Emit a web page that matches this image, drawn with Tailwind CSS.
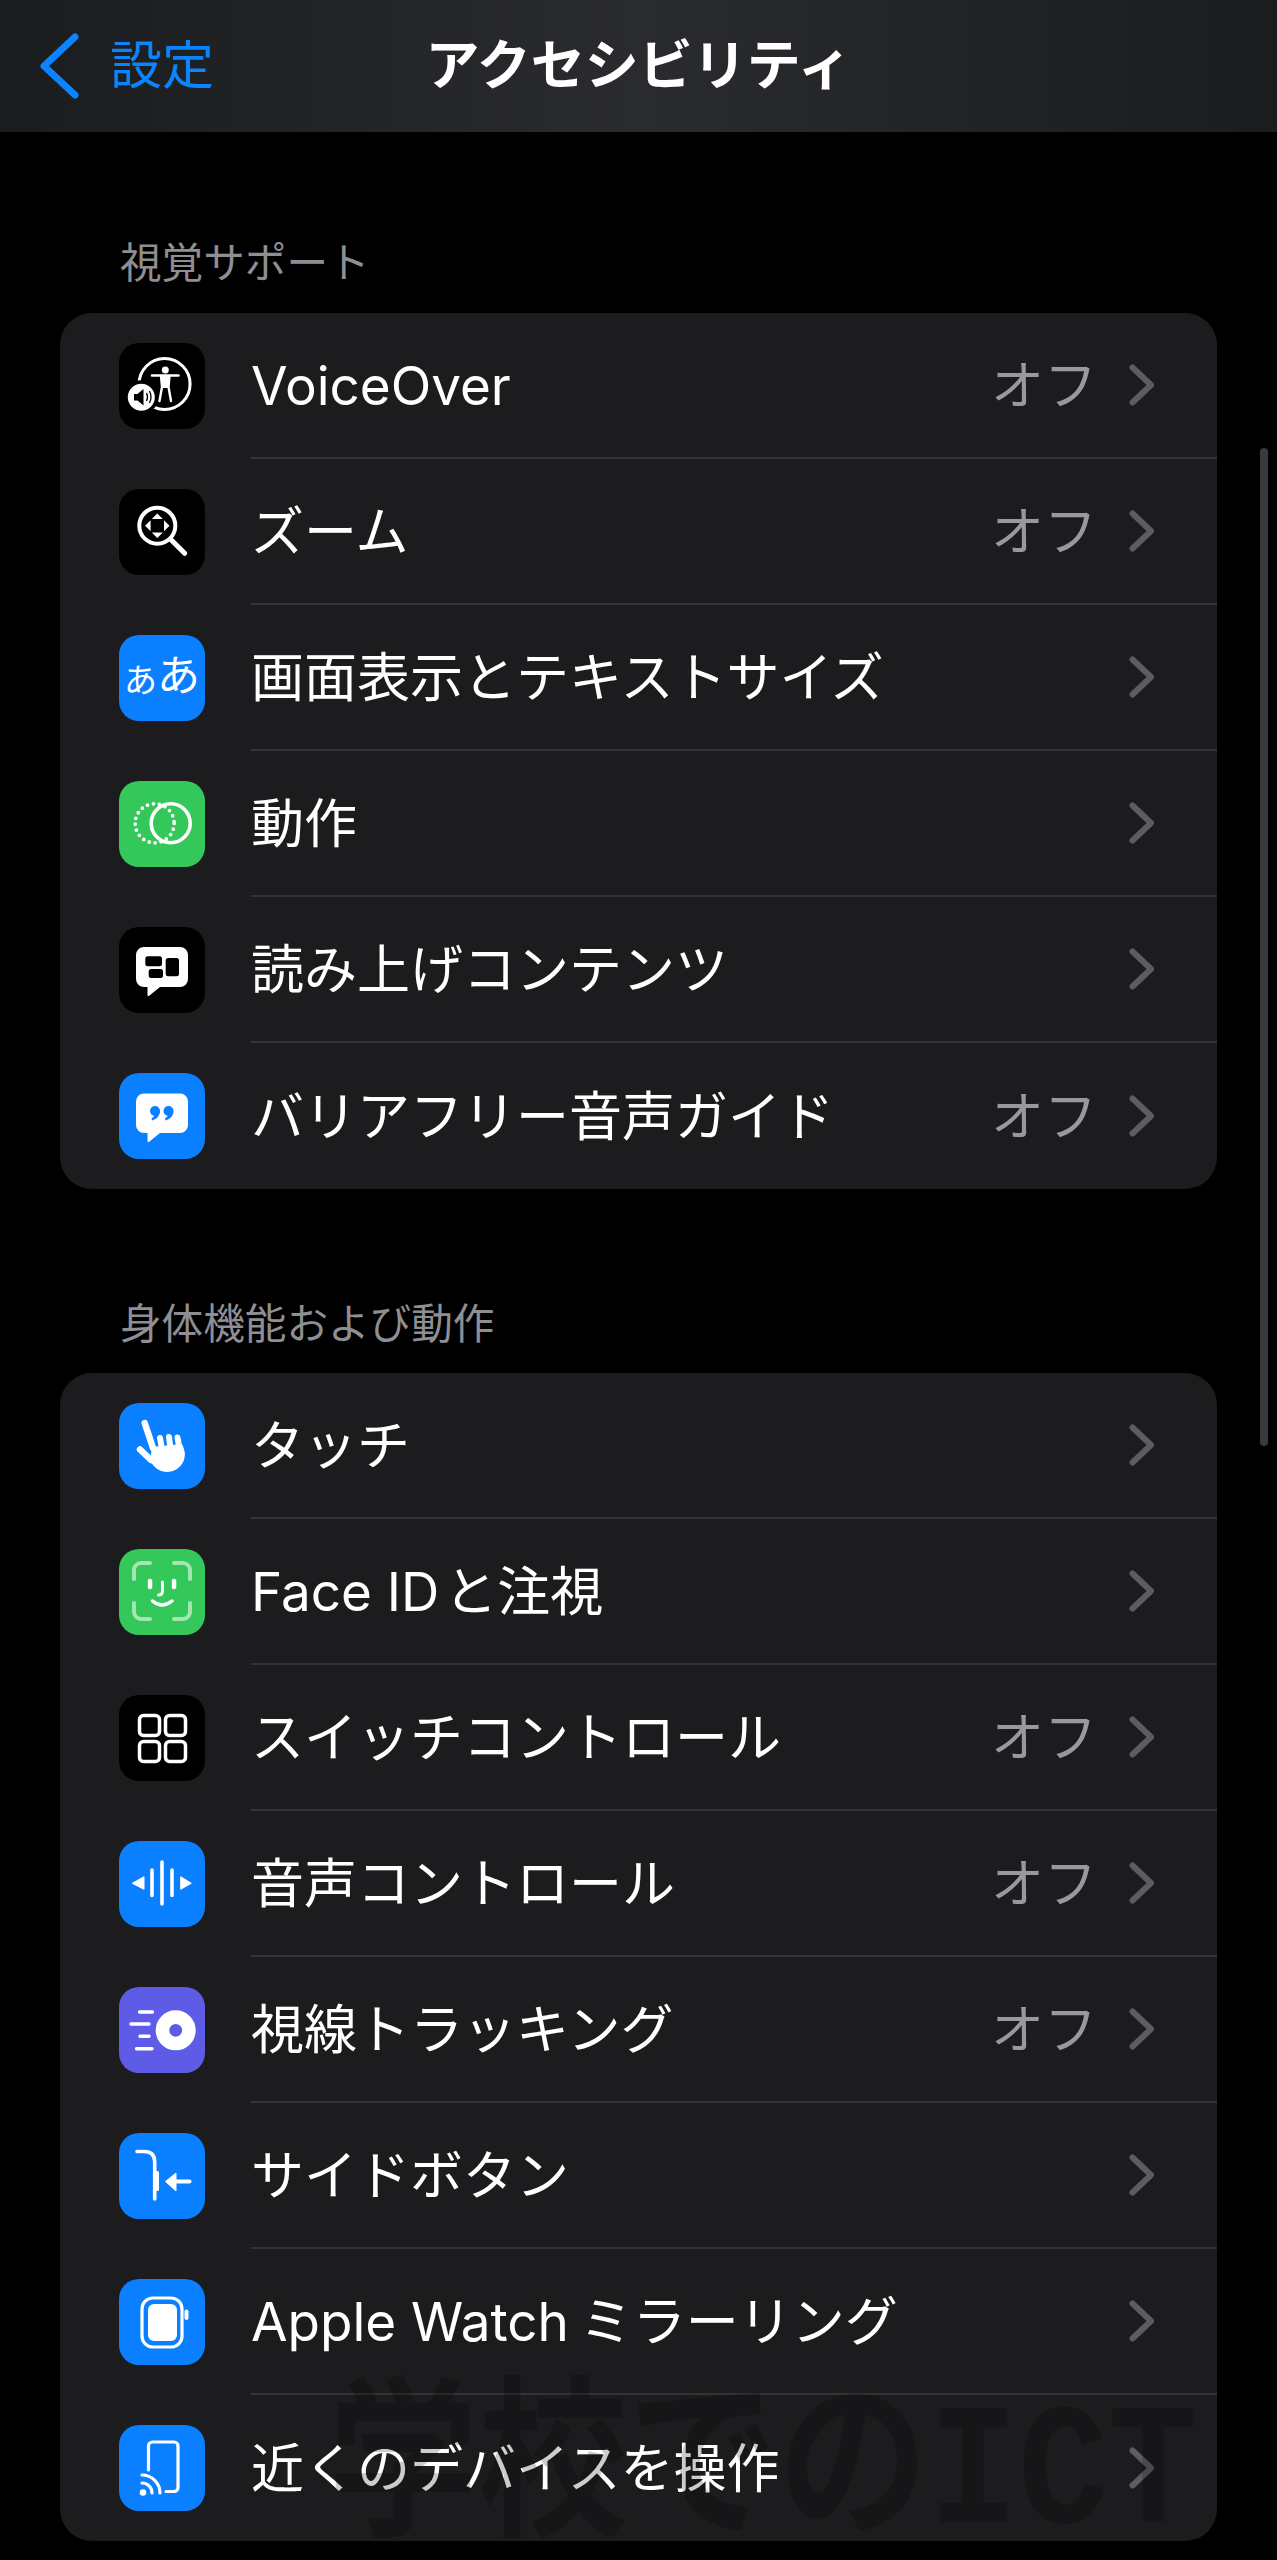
<!DOCTYPE html>
<html lang="ja">

<head>
  <meta charset="UTF-8" />
  <meta name="viewport" content="width=device-width, initial-scale=1.0" />
  <title>アクセシビリティ</title>
  <script src="https://cdn.jsdelivr.net/npm/@tailwindcss/browser@4"></script>
</head>

<body class="bg-black">
  <div class="relative w-[1277px] h-[2560px] overflow-hidden bg-black text-white font-['Inter','Noto_Sans_CJK_JP',sans-serif]">
    <!-- Nav bar -->
    <header class="h-[132px] grid grid-cols-[1fr_auto_1fr] items-center bg-linear-to-r from-[#1b1c1e] via-[#2a2b2e] to-[#1b1c1e]">
      <div class="flex items-center pl-[38px] gap-[30px] text-[#0a84ff]">
        <svg width="42" height="66" viewBox="0 0 42 66" fill="none"><path d="M37 4 L6 33 L37 62" stroke="#0a84ff" stroke-width="7" stroke-linecap="round" stroke-linejoin="round" /></svg>
        <span class="text-[52px] leading-none">設定</span>
      </div>
      <h1 class="text-[54px] leading-none font-semibold">アクセシビリティ</h1>
      <div></div>
    </header>

    <!-- Vision -->
    <div class="pl-[120px] mt-[106px] mb-[25px] text-[41.6px] leading-[50px] text-[#8e8e93]">視覚サポート</div>
    <section class="mx-[60px] rounded-[32px] bg-[#1c1c1e]">
      <div class="h-[146px] flex items-center pl-[59px]">
        <div class="w-[86px] h-[86px] shrink-0 rounded-[20px] bg-black">
          <svg width="86" height="86" viewBox="0 0 86 86" fill="none">
            <circle cx="45.6" cy="41" r="25.5" stroke="#fff" stroke-width="3" />
            <circle cx="22.3" cy="54.3" r="17" fill="#000" />
            <circle cx="22.3" cy="54.3" r="13.5" fill="#fff" />
            <path d="M15 51 h3.5 l6 -5 v16.5 l-6 -5 h-3.5z" fill="#000" />
            <path d="M27.5 50 q2 4 0 8 M30.5 48 q3 6 0 12" stroke="#000" stroke-width="1.3" />
            <circle cx="46.3" cy="27" r="3.5" fill="#fff" />
            <path d="M33 32.5 H59.5" stroke="#fff" stroke-width="2.6" stroke-linecap="round" />
            <path d="M42 33 L43 44 L40.5 58 M50.5 33 L49.5 44 L52 58" stroke="#fff" stroke-width="2.4" stroke-linecap="round" />
            <path d="M42.5 33 H50 L49.5 45 H43z" fill="#fff" />
          </svg>
        </div>
        <div class="ml-[46px] flex-1 h-full flex items-center border-b-2 border-[#333336] pr-[62px]">
          <span class="flex-1 pt-[3px] text-[53px] leading-none">VoiceOver</span>
          <span class="pt-[3px] text-[53px] leading-none text-[#98989f] mr-[32px]">オフ</span>
          <svg width="26" height="42" viewBox="0 0 26 42" fill="none"><path d="M3.5 3.5 L22 21 L3.5 38.5" stroke="#5d5d61" stroke-width="6" stroke-linecap="round" stroke-linejoin="round" /></svg>
        </div>
      </div>
      <div class="h-[146px] flex items-center pl-[59px]">
        <div class="w-[86px] h-[86px] shrink-0 rounded-[20px] bg-black">
          <svg width="86" height="86" viewBox="0 0 86 86" fill="none">
            <circle cx="38.3" cy="36.7" r="18" stroke="#fff" stroke-width="4" />
            <path d="M52.3 51 L65.7 64.3" stroke="#fff" stroke-width="5" stroke-linecap="round" />
            <path d="M38.3 24.5 l5.5 5.5 h-11z M38.3 48.9 l5.5 -5.5 h-11z M26.1 36.7 l5.5 -5.5 v11z M50.5 36.7 l-5.5 -5.5 v11z" fill="#fff" />
          </svg>
        </div>
        <div class="ml-[46px] flex-1 h-full flex items-center border-b-2 border-[#333336] pr-[62px]">
          <span class="flex-1 pt-[3px] text-[53px] leading-none">ズーム</span>
          <span class="pt-[3px] text-[53px] leading-none text-[#98989f] mr-[32px]">オフ</span>
          <svg width="26" height="42" viewBox="0 0 26 42" fill="none"><path d="M3.5 3.5 L22 21 L3.5 38.5" stroke="#5d5d61" stroke-width="6" stroke-linecap="round" stroke-linejoin="round" /></svg>
        </div>
      </div>
      <div class="h-[146px] flex items-center pl-[59px]">
        <div class="w-[86px] h-[86px] shrink-0 rounded-[20px] bg-[#0a7fff] flex items-end justify-center pb-[24px]">
          <span class="text-[33px] leading-none">あ</span><span class="text-[43px] leading-none">あ</span>
        </div>
        <div class="ml-[46px] flex-1 h-full flex items-center border-b-2 border-[#333336] pr-[62px]">
          <span class="flex-1 pt-[3px] text-[53px] leading-none">画面表示とテキストサイズ</span>
          <svg width="26" height="42" viewBox="0 0 26 42" fill="none"><path d="M3.5 3.5 L22 21 L3.5 38.5" stroke="#5d5d61" stroke-width="6" stroke-linecap="round" stroke-linejoin="round" /></svg>
        </div>
      </div>
      <div class="h-[146px] flex items-center pl-[59px]">
        <div class="w-[86px] h-[86px] shrink-0 rounded-[20px] bg-[#34c759]">
          <svg width="86" height="86" viewBox="0 0 86 86" fill="none">
            <circle cx="35.7" cy="42.3" r="19.5" stroke="#fff" stroke-width="3.8" stroke-linecap="round" stroke-dasharray="0 6" />
            <circle cx="51.7" cy="42.3" r="19.5" stroke="#fff" stroke-width="3.6" />
          </svg>
        </div>
        <div class="ml-[46px] flex-1 h-full flex items-center border-b-2 border-[#333336] pr-[62px]">
          <span class="flex-1 pt-[3px] text-[53px] leading-none">動作</span>
          <svg width="26" height="42" viewBox="0 0 26 42" fill="none"><path d="M3.5 3.5 L22 21 L3.5 38.5" stroke="#5d5d61" stroke-width="6" stroke-linecap="round" stroke-linejoin="round" /></svg>
        </div>
      </div>
      <div class="h-[146px] flex items-center pl-[59px]">
        <div class="w-[86px] h-[86px] shrink-0 rounded-[20px] bg-black">
          <svg width="86" height="86" viewBox="0 0 86 86" fill="none">
            <path d="M25 20 H61 a8 8 0 0 1 8 8 V52 a8 8 0 0 1 -8 8 H41 L30.5 68.5 Q28.5 70 28.5 67.5 V60 H25 a8 8 0 0 1 -8 -8 V28 a8 8 0 0 1 8 -8z" fill="#fff" />
            <rect x="26.3" y="29.3" width="16.7" height="10" rx="2.5" fill="#000" />
            <rect x="29.7" y="42" width="14.3" height="9" rx="2.5" fill="#000" />
            <rect x="46.7" y="31" width="13.3" height="18.3" rx="2.5" fill="#000" />
          </svg>
        </div>
        <div class="ml-[46px] flex-1 h-full flex items-center border-b-2 border-[#333336] pr-[62px]">
          <span class="flex-1 pt-[3px] text-[53px] leading-none">読み上げコンテンツ</span>
          <svg width="26" height="42" viewBox="0 0 26 42" fill="none"><path d="M3.5 3.5 L22 21 L3.5 38.5" stroke="#5d5d61" stroke-width="6" stroke-linecap="round" stroke-linejoin="round" /></svg>
        </div>
      </div>
      <div class="h-[146px] flex items-center pl-[59px]">
        <div class="w-[86px] h-[86px] shrink-0 rounded-[20px] bg-[#0a7fff]">
          <svg width="86" height="86" viewBox="0 0 86 86" fill="none">
            <path d="M25 20.5 H61 a8 8 0 0 1 8 8 V52 a8 8 0 0 1 -8 8 H41 L30.5 68.5 Q28.5 70 28.5 67.5 V60 H25 a8 8 0 0 1 -8 -8 V28.5 a8 8 0 0 1 8 -8z" fill="#fff" />
            <circle cx="36" cy="38" r="5" fill="#0a7fff" />
            <circle cx="49.5" cy="38" r="5" fill="#0a7fff" />
            <path d="M41 38 Q41 45 33 47.5 L32.5 45.5 Q36 43 36 40z M54.5 38 Q54.5 45 46.5 47.5 L46 45.5 Q49.5 43 49.5 40z" fill="#0a7fff" />
          </svg>
        </div>
        <div class="ml-[46px] flex-1 h-full flex items-center pr-[62px]">
          <span class="flex-1 pt-[3px] text-[53px] leading-none">バリアフリー音声ガイド</span>
          <span class="pt-[3px] text-[53px] leading-none text-[#98989f] mr-[32px]">オフ</span>
          <svg width="26" height="42" viewBox="0 0 26 42" fill="none"><path d="M3.5 3.5 L22 21 L3.5 38.5" stroke="#5d5d61" stroke-width="6" stroke-linecap="round" stroke-linejoin="round" /></svg>
        </div>
      </div>
    </section>

    <!-- Physical and motor -->
    <div class="pl-[120px] mt-[110px] mb-[24px] text-[41.6px] leading-[50px] text-[#8e8e93]">身体機能および動作</div>
    <section class="mx-[60px] rounded-[32px] bg-[#1c1c1e]">
      <div class="h-[146px] flex items-center pl-[59px]">
        <div class="w-[86px] h-[86px] shrink-0 rounded-[20px] bg-[#0a7fff]">
          <svg width="86" height="86" viewBox="0 0 86 86" fill="none">
            <path d="M25.7 20 L34 45 M21 46.5 L32 57" stroke="#fff" stroke-width="6.5" stroke-linecap="round" />
            <path d="M41 35 L43 46 M50 34 L51.5 46 M58.5 34.5 L60.5 46" stroke="#fff" stroke-width="6" stroke-linecap="round" />
            <path d="M33 44 L63 41 Q67.5 50 65 57 Q60 69 47 69 Q38 69 31 58z" fill="#fff" />
          </svg>
        </div>
        <div class="ml-[46px] flex-1 h-full flex items-center border-b-2 border-[#333336] pr-[62px]">
          <span class="flex-1 pt-[3px] text-[53px] leading-none">タッチ</span>
          <svg width="26" height="42" viewBox="0 0 26 42" fill="none"><path d="M3.5 3.5 L22 21 L3.5 38.5" stroke="#5d5d61" stroke-width="6" stroke-linecap="round" stroke-linejoin="round" /></svg>
        </div>
      </div>
      <div class="h-[146px] flex items-center pl-[59px]">
        <div class="w-[86px] h-[86px] shrink-0 rounded-[20px] bg-[#34c759]">
          <svg width="86" height="86" viewBox="0 0 86 86" fill="none">
            <path d="M15 30 V21 a7 7 0 0 1 7 -7 H31 M55 14 H64 a7 7 0 0 1 7 7 V30 M15 54 V63 a7 7 0 0 0 7 7 H31 M55 70 H64 a7 7 0 0 0 7 -7 V54" stroke="#fff" stroke-opacity="0.55" stroke-width="4" stroke-linecap="round" />
            <path d="M31 32 V38 M55 32 V38" stroke="#fff" stroke-width="4.5" stroke-linecap="round" />
            <path d="M43.5 33 V42 Q43.5 46 39.5 46" stroke="#fff" stroke-width="3" stroke-linecap="round" />
            <path d="M33.5 52 Q43 60 53 52" stroke="#fff" stroke-width="3.5" stroke-linecap="round" />
          </svg>
        </div>
        <div class="ml-[46px] flex-1 h-full flex items-center border-b-2 border-[#333336] pr-[62px]">
          <span class="flex-1 pt-[3px] text-[53px] leading-none"><span class="mr-[5px]">Face ID</span>と注視</span>
          <svg width="26" height="42" viewBox="0 0 26 42" fill="none"><path d="M3.5 3.5 L22 21 L3.5 38.5" stroke="#5d5d61" stroke-width="6" stroke-linecap="round" stroke-linejoin="round" /></svg>
        </div>
      </div>
      <div class="h-[146px] flex items-center pl-[59px]">
        <div class="w-[86px] h-[86px] shrink-0 rounded-[20px] bg-black">
          <svg width="86" height="86" viewBox="0 0 86 86" fill="none" stroke="#fff" stroke-width="3.5">
            <rect x="20.5" y="20.5" width="20" height="20" rx="4" />
            <rect x="46.5" y="20.5" width="20" height="20" rx="4" />
            <rect x="20.5" y="46.5" width="20" height="20" rx="4" />
            <rect x="46.5" y="46.5" width="20" height="20" rx="4" />
          </svg>
        </div>
        <div class="ml-[46px] flex-1 h-full flex items-center border-b-2 border-[#333336] pr-[62px]">
          <span class="flex-1 pt-[3px] text-[53px] leading-none">スイッチコントロール</span>
          <span class="pt-[3px] text-[53px] leading-none text-[#98989f] mr-[32px]">オフ</span>
          <svg width="26" height="42" viewBox="0 0 26 42" fill="none"><path d="M3.5 3.5 L22 21 L3.5 38.5" stroke="#5d5d61" stroke-width="6" stroke-linecap="round" stroke-linejoin="round" /></svg>
        </div>
      </div>
      <div class="h-[146px] flex items-center pl-[59px]">
        <div class="w-[86px] h-[86px] shrink-0 rounded-[20px] bg-[#0a7fff]">
          <svg width="86" height="86" viewBox="0 0 86 86" fill="none">
            <path d="M43 21 V63 M33 29 V54.5 M53 29 V54.5" stroke="#fff" stroke-width="3.6" stroke-linecap="round" />
            <path d="M13.3 42.3 L25 35.7 V48.3z M72.3 42.3 L61.7 35.7 V48.3z" fill="#fff" stroke="#fff" stroke-linejoin="round" />
          </svg>
        </div>
        <div class="ml-[46px] flex-1 h-full flex items-center border-b-2 border-[#333336] pr-[62px]">
          <span class="flex-1 pt-[3px] text-[53px] leading-none">音声コントロール</span>
          <span class="pt-[3px] text-[53px] leading-none text-[#98989f] mr-[32px]">オフ</span>
          <svg width="26" height="42" viewBox="0 0 26 42" fill="none"><path d="M3.5 3.5 L22 21 L3.5 38.5" stroke="#5d5d61" stroke-width="6" stroke-linecap="round" stroke-linejoin="round" /></svg>
        </div>
      </div>
      <div class="h-[146px] flex items-center pl-[59px]">
        <div class="w-[86px] h-[86px] shrink-0 rounded-[20px] bg-[#5e5ce6]">
          <svg width="86" height="86" viewBox="0 0 86 86" fill="none">
            <path d="M20.5 25 H33.5 M12 37 H30 M21 49.3 H30 M17.5 61.7 H33" stroke="#fff" stroke-width="3.4" stroke-linecap="round" />
            <circle cx="56.7" cy="43.3" r="13.2" stroke="#fff" stroke-width="13.6" />
          </svg>
        </div>
        <div class="ml-[46px] flex-1 h-full flex items-center border-b-2 border-[#333336] pr-[62px]">
          <span class="flex-1 pt-[3px] text-[53px] leading-none">視線トラッキング</span>
          <span class="pt-[3px] text-[53px] leading-none text-[#98989f] mr-[32px]">オフ</span>
          <svg width="26" height="42" viewBox="0 0 26 42" fill="none"><path d="M3.5 3.5 L22 21 L3.5 38.5" stroke="#5d5d61" stroke-width="6" stroke-linecap="round" stroke-linejoin="round" /></svg>
        </div>
      </div>
      <div class="h-[146px] flex items-center pl-[59px]">
        <div class="w-[86px] h-[86px] shrink-0 rounded-[20px] bg-[#0a7fff]">
          <svg width="86" height="86" viewBox="0 0 86 86" fill="none">
            <path d="M18 18.5 H25 Q35.7 18.5 35.7 29 V66" stroke="#fff" stroke-width="3.6" stroke-linecap="round" />
            <rect x="35.7" y="38" width="4.3" height="20" rx="1.5" fill="#fff" />
            <path d="M55 48.5 H70.5" stroke="#fff" stroke-width="4" stroke-linecap="round" />
            <path d="M46.5 48.5 L57 40 V58z" fill="#fff" stroke="#fff" stroke-linejoin="round" />
          </svg>
        </div>
        <div class="ml-[46px] flex-1 h-full flex items-center border-b-2 border-[#333336] pr-[62px]">
          <span class="flex-1 pt-[3px] text-[53px] leading-none">サイドボタン</span>
          <svg width="26" height="42" viewBox="0 0 26 42" fill="none"><path d="M3.5 3.5 L22 21 L3.5 38.5" stroke="#5d5d61" stroke-width="6" stroke-linecap="round" stroke-linejoin="round" /></svg>
        </div>
      </div>
      <div class="h-[146px] flex items-center pl-[59px]">
        <div class="w-[86px] h-[86px] shrink-0 rounded-[20px] bg-[#0a7fff]">
          <svg width="86" height="86" viewBox="0 0 86 86" fill="none">
            <rect x="23" y="19" width="40" height="49" rx="11" stroke="#fff" stroke-width="3.2" />
            <rect x="29" y="25" width="29" height="37" rx="6" fill="#fff" />
            <rect x="65.5" y="30.5" width="4" height="10.5" rx="2" fill="#fff" />
          </svg>
        </div>
        <div class="ml-[46px] flex-1 h-full flex items-center border-b-2 border-[#333336] pr-[62px]">
          <span class="flex-1 pt-[3px] text-[53px] leading-none"><span class="mr-[11px]">Apple Watch</span>ミラーリング</span>
          <svg width="26" height="42" viewBox="0 0 26 42" fill="none"><path d="M3.5 3.5 L22 21 L3.5 38.5" stroke="#5d5d61" stroke-width="6" stroke-linecap="round" stroke-linejoin="round" /></svg>
        </div>
      </div>
      <div class="h-[146px] flex items-center pl-[59px]">
        <div class="w-[86px] h-[86px] shrink-0 rounded-[20px] bg-[#0a7fff]">
          <svg width="86" height="86" viewBox="0 0 86 86" fill="none">
            <path d="M29.5 45 V21 a4 4 0 0 1 4 -4 H55 a4 4 0 0 1 4 4 V62.5 a4 4 0 0 1 -4 4 H47" stroke="#fff" stroke-width="3.2" stroke-linecap="round" />
            <circle cx="24" cy="67.5" r="3.3" fill="#fff" />
            <path d="M23 58 a10 10 0 0 1 10 10 M23 50 a18 18 0 0 1 18 18" stroke="#fff" stroke-width="3.2" stroke-linecap="round" />
          </svg>
        </div>
        <div class="ml-[46px] flex-1 h-full flex items-center pr-[62px]">
          <span class="flex-1 pt-[3px] text-[53px] leading-none">近くのデバイスを操作</span>
          <svg width="26" height="42" viewBox="0 0 26 42" fill="none"><path d="M3.5 3.5 L22 21 L3.5 38.5" stroke="#5d5d61" stroke-width="6" stroke-linecap="round" stroke-linejoin="round" /></svg>
        </div>
      </div>
    </section>

    <!-- Scroll indicator -->
    <div class="absolute left-[1260px] top-[448px] w-[8px] h-[998px] rounded-full bg-[#3a3a3c]"></div>

    <!-- Watermark -->
    <div class="absolute left-[328px] top-[2397px] origin-top scale-y-[1.15] text-[150px] leading-[138px] font-bold text-black/20 whitespace-nowrap font-['Liberation_Mono','Noto_Sans_CJK_JP',monospace]">学校でのICT</div>
  </div>
</body>

</html>
